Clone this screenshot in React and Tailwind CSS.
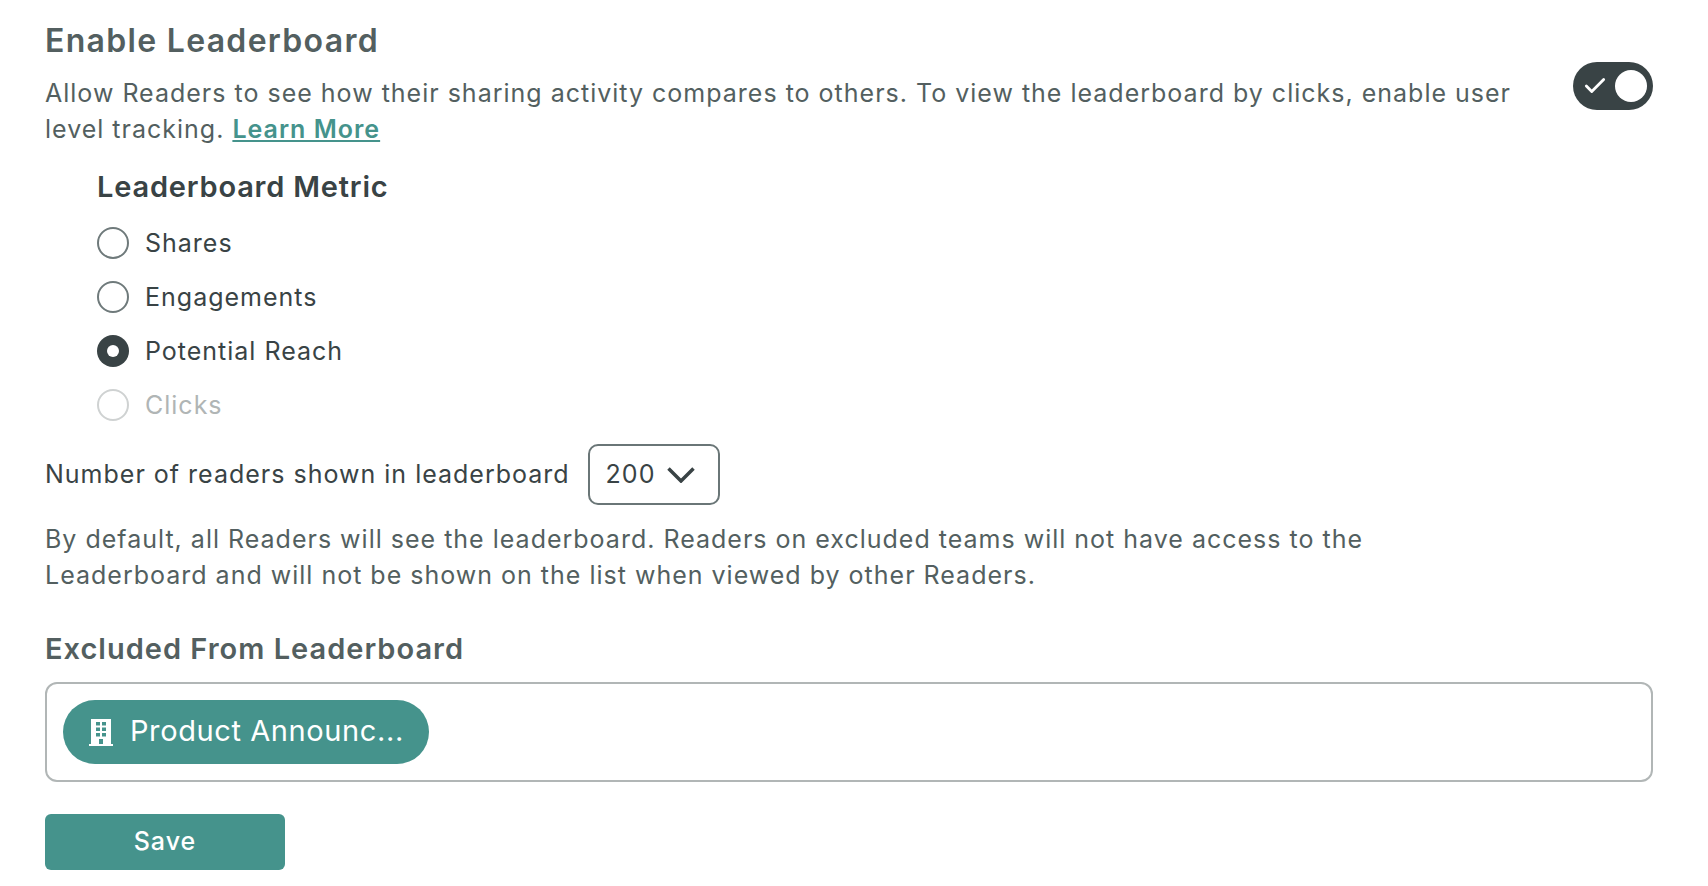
import { Check } from "lucide-react";

const metrics = [
  { label: "Shares" },
  { label: "Engagements" },
  { label: "Potential Reach", checked: true },
  { label: "Clicks", disabled: true },
];

function Radio({ label, checked, disabled }) {
  return (
    <label className={`flex items-center gap-[16px] h-[54px] ${disabled ? "text-[#b0b5b5]" : "text-[#394345]"}`}>
      {checked ? (
        <span className="w-8 h-8 rounded-full bg-[#394345] flex items-center justify-center">
          <span className="w-3 h-3 rounded-full bg-white" />
        </span>
      ) : (
        <span className={`w-8 h-8 rounded-full border-2 ${disabled ? "border-[#cfd2d2]" : "border-[#6f7a7b]"}`} />
      )}
      {label}
    </label>
  );
}

function BuildingIcon() {
  return (
    <svg viewBox="0 0 24 27" className="w-6 h-[27px] shrink-0" fill="currentColor">
      <path
        fillRule="evenodd"
        d="M2 0h20v25h2v2H0v-2h2zM7 3v3.5h4V3zM13 3v3.5h4V3zM7 8.5V12h4V8.5zM13 8.5V12h4V8.5zM7 14v3.5h4V14zM13 14v3.5h4V14zM10 20v5h4v-5z"
      />
    </svg>
  );
}

export default function App() {
  return (
    <div className="min-h-[886px] bg-white pl-[45px] pr-[55px] pt-[21px] text-[25px] leading-[36px] tracking-[1px] text-[#535f60] font-['Inter',sans-serif]">
      <h2 className="text-[32px] leading-10 font-semibold tracking-[1.3px] text-[#535f60]">Enable Leaderboard</h2>
      <div className="flex justify-between items-start mt-[14px]">
        <p>
          Allow Readers to see how their sharing activity compares to others. To view the leaderboard by clicks, enable user
          <br />
          level tracking.{" "}
          <a href="#" className="font-semibold text-[#45938c] underline">Learn More</a>
        </p>
        <div className="relative w-20 h-12 rounded-full bg-[#394345] flex items-center justify-end pr-[6px] mt-[-13px]">
          <Check className="absolute left-[9px] text-white w-[26px] h-[26px]" strokeWidth={2.6} />
          <span className="w-8 h-8 rounded-full bg-white" />
        </div>
      </div>

      <div className="pl-[52px] mt-[20px]">
        <h3 className="text-[29px] leading-10 font-semibold tracking-[0.8px] text-[#394345] mb-[9px]">Leaderboard Metric</h3>
        {metrics.map((m) => (
          <Radio key={m.label} {...m} />
        ))}
      </div>

      <div className="flex items-center gap-[18px] mt-[12px] text-[#394345]">
        <span className="pb-[2px]">Number of readers shown in leaderboard</span>
        <div className="w-[132px] h-[61px] rounded-[10px] border-2 border-[#6a7677] flex items-center pl-[16px] gap-[12px]">
          <span className="pb-[2px]">200</span>
          <svg viewBox="0 0 28 16" className="w-7 h-4" fill="none" stroke="currentColor" strokeWidth="3.5">
            <path d="M1.5 1.5 14 14 26.5 1.5" />
          </svg>
        </div>
      </div>

      <p className="mt-[16px]">
        By default, all Readers will see the leaderboard. Readers on excluded teams will not have access to the
        <br />
        Leaderboard and will not be shown on the list when viewed by other Readers.
      </p>

      <h3 className="text-[29px] leading-10 font-semibold tracking-[1px] text-[#535f60] mt-[36px]">Excluded From Leaderboard</h3>
      <div className="mt-[13px] h-[100px] rounded-[12px] border-2 border-[#b1b6b6] pl-4 flex items-center">
        <div className="h-16 w-[366px] rounded-full bg-[#45938c] text-white text-[29px] tracking-[0.6px] flex items-center pl-[26px] gap-[17px]">
          <BuildingIcon />
          <span className="pb-[2px]">Product Announc...</span>
        </div>
      </div>
      <button className="mt-[32px] block w-60 h-14 pb-[2px] rounded-[6px] bg-[#45938c] text-white font-medium">Save</button>
    </div>
  );
}
